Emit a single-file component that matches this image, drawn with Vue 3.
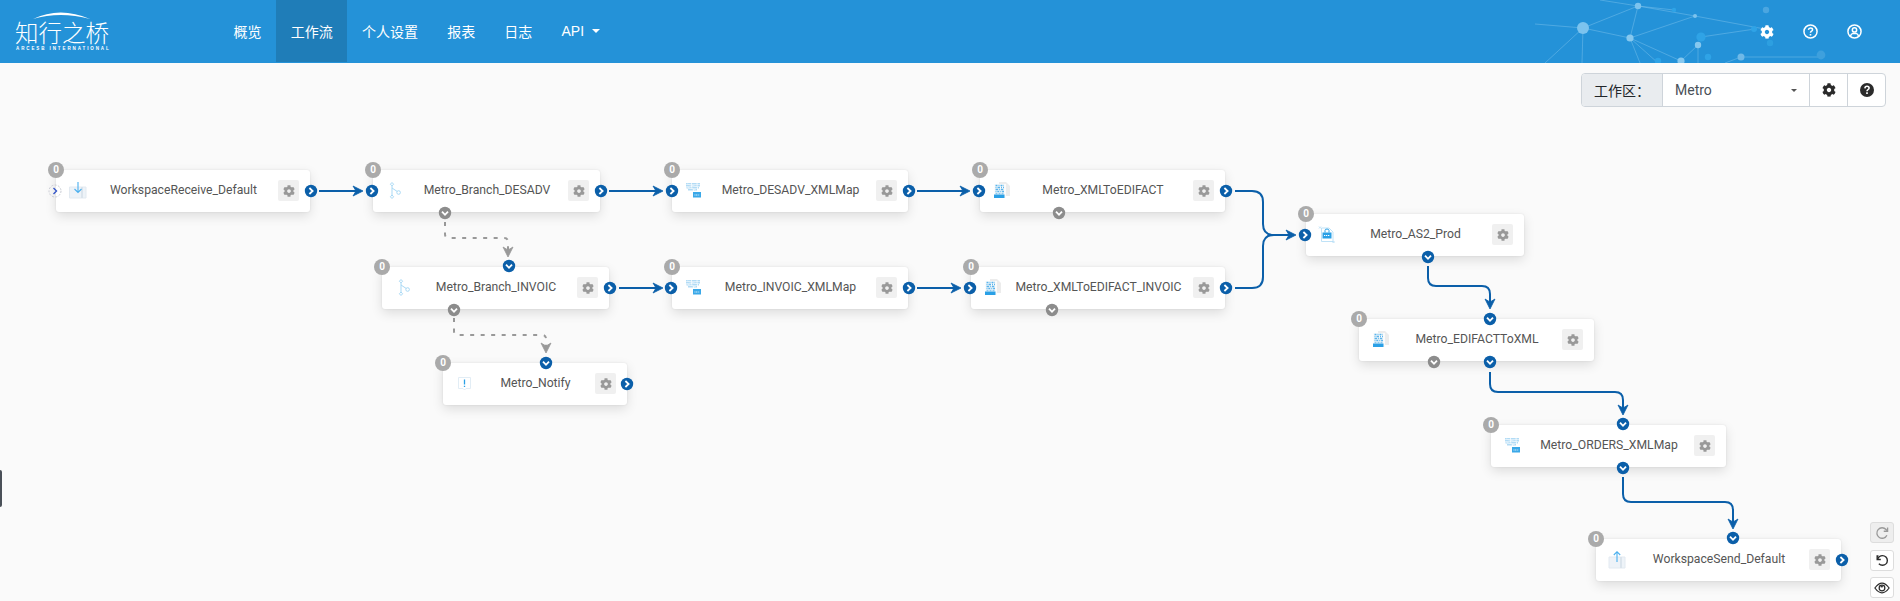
<script setup>
const navItems = [
  { label: '概览' },
  { label: '工作流', active: true },
  { label: '个人设置' },
  { label: '报表' },
  { label: '日志' },
  { label: 'API', caret: true }
]

const nodes = [
  { name: 'WorkspaceReceive_Default', x: 56, y: 170, w: 254, icon: 'receive' },
  { name: 'Metro_Branch_DESADV', x: 373, y: 170, w: 227, icon: 'branch' },
  { name: 'Metro_DESADV_XMLMap', x: 672, y: 170, w: 236, icon: 'map' },
  { name: 'Metro_XMLToEDIFACT', x: 980, y: 170, w: 245, icon: 'doc' },
  { name: 'Metro_Branch_INVOIC', x: 382, y: 267, w: 227, icon: 'branch' },
  { name: 'Metro_INVOIC_XMLMap', x: 672, y: 267, w: 236, icon: 'map' },
  { name: 'Metro_XMLToEDIFACT_INVOIC', x: 971, y: 267, w: 254, icon: 'doc' },
  { name: 'Metro_Notify', x: 443, y: 363, w: 184, icon: 'notify' },
  { name: 'Metro_AS2_Prod', x: 1306, y: 214, w: 218, icon: 'as2' },
  { name: 'Metro_EDIFACTToXML', x: 1359, y: 319, w: 235, icon: 'doc' },
  { name: 'Metro_ORDERS_XMLMap', x: 1491, y: 425, w: 235, icon: 'map' },
  { name: 'WorkspaceSend_Default', x: 1596, y: 539, w: 245, icon: 'send' }
]

// [x, y, direction, tone]
const ports = [
  [311, 191, 'r', 'blue'], [372, 191, 'r', 'blue'], [601, 191, 'r', 'blue'], [672, 191, 'r', 'blue'],
  [909, 191, 'r', 'blue'], [979, 191, 'r', 'blue'], [1226, 191, 'r', 'blue'],
  [610, 288, 'r', 'blue'], [671, 288, 'r', 'blue'], [909, 288, 'r', 'blue'], [970, 288, 'r', 'blue'],
  [1226, 288, 'r', 'blue'], [1305, 235, 'r', 'blue'], [627, 384, 'r', 'blue'], [1842, 560, 'r', 'blue'],
  [509, 266, 'd', 'blue'], [546, 363, 'd', 'blue'], [1490, 319, 'd', 'blue'], [1623, 424, 'd', 'blue'],
  [1733, 538, 'd', 'blue'], [1428, 257, 'd', 'blue'], [1490, 362, 'd', 'blue'], [1623, 468, 'd', 'blue'],
  [445, 213, 'd', 'gray'], [454, 310, 'd', 'gray'], [1059, 213, 'd', 'gray'], [1052, 310, 'd', 'gray'],
  [1434, 362, 'd', 'gray']
]

const solidEdges = [
  'M319 191H356', 'M609 191H656', 'M917 191H963', 'M619 288H656', 'M917 288H954',
  'M1235 191H1252Q1263 191 1263 202V224Q1263 235 1274 235H1289',
  'M1235 288H1252Q1263 288 1263 277V246Q1263 235 1274 235H1289',
  'M1428 266V278Q1428 286 1436 286H1482Q1490 286 1490 294V302',
  'M1490 372V384Q1490 392 1498 392H1615Q1623 392 1623 400V408',
  'M1623 477V494Q1623 502 1631 502H1725Q1733 502 1733 510V522'
]

const dashedEdges = [
  'M445 222V234Q445 238 449 238H504Q508 238 508 242V250',
  'M454 318V331Q454 335 458 335H542Q546 335 546 339V346'
]

const solidHeads = [
  [363, 191, 0], [663, 191, 0], [970, 191, 0], [663, 288, 0], [961, 288, 0], [1296, 235, 0],
  [1490, 309, 90], [1623, 415, 90], [1733, 529, 90]
]
const dashedHeads = [[508, 257, 90], [546, 353, 90]]

const cogPath = 'M487.4 315.7l-42.6-24.6c4.3-23.2 4.3-47 0-70.2l42.6-24.6c4.9-2.8 7.1-8.6 5.5-14-11.1-35.6-30-67.8-54.7-94.6-3.8-4.1-10-5.1-14.8-2.3L380.8 110c-17.9-15.4-38.5-27.3-60.8-35.1V25.8c0-5.6-3.9-10.5-9.4-11.7-36.7-8.2-74.3-7.8-109.2 0-5.5 1.2-9.4 6.1-9.4 11.7V75c-22.2 7.9-42.8 19.8-60.8 35.1L88.7 85.5c-4.9-2.8-11-1.9-14.8 2.3-24.7 26.7-43.6 58.9-54.7 94.6-1.7 5.4.6 11.2 5.5 14L67.3 221c-4.3 23.2-4.3 47 0 70.2l-42.6 24.6c-4.9 2.8-7.1 8.6-5.5 14 11.1 35.6 30 67.8 54.7 94.6 3.8 4.1 10 5.1 14.8 2.3l42.6-24.6c17.9 15.4 38.5 27.3 60.8 35.1v49.2c0 5.6 3.9 10.5 9.4 11.7 36.7 8.2 74.3 7.8 109.2 0 5.5-1.2 9.4-6.1 9.4-11.7v-49.2c22.2-7.9 42.8-19.8 60.8-35.1l42.6 24.6c4.9 2.8 11 1.9 14.8-2.3 24.7-26.7 43.6-58.9 54.7-94.6 1.5-5.5-.7-11.3-5.6-14.1zM256 336c-44.1 0-80-35.9-80-80s35.9-80 80-80 80 35.9 80 80-35.9 80-80 80z'

const netLines = [
  [1583, 28, 1638, 6], [1583, 28, 1630, 38], [1638, 6, 1630, 38], [1638, 6, 1695, 16], [1630, 38, 1695, 16],
  [1630, 38, 1681, 61], [1630, 38, 1640, 63], [1630, 38, 1658, 63], [1583, 28, 1582, 63], [1583, 28, 1545, 63],
  [1583, 28, 1535, 24], [1638, 6, 1600, 0], [1681, 61, 1698, 45], [1698, 45, 1698, 63], [1741, 57, 1821, 57],
  [1701, 37, 1755, 29], [1695, 16, 1770, 30], [1741, 57, 1725, 63], [1638, 6, 1674, 10]
]
const netDots = [
  [1583, 28, 6, '#7cc3ee'], [1638, 6, 3.2, '#7cc3ee'], [1630, 38, 3.6, '#86c8ef'], [1695, 16, 2, '#7cc3ee'],
  [1698, 45, 3.2, '#86c8ef'], [1681, 61, 3.6, '#86c8ef'], [1741, 57, 3.5, '#6fb9e8'],
  [1701, 37, 4.6, '#2fa3e6'], [1708, 57, 3.2, '#2fa3e6'], [1658, 61, 3.2, '#2fa3e6'], [1674, 10, 2.2, '#2fa3e6'],
  [1766, 10, 3.2, '#4ba6e0'], [1754, 29, 3, '#2fa3e6'], [1770, 43, 3.2, '#2d9fe0'], [1821, 55, 4.4, '#3ea0dd']
]
</script>

<template>
  <div class="page">
    <header class="topbar">
      <svg class="network" width="1900" height="63" viewBox="0 0 1900 63">
        <line v-for="(l, i) in netLines" :key="'l' + i" :x1="l[0]" :y1="l[1]" :x2="l[2]" :y2="l[3]" stroke="#9fd3f3" stroke-opacity=".35" stroke-width="1" />
        <circle v-for="(d, i) in netDots" :key="'d' + i" :cx="d[0]" :cy="d[1]" :r="d[2]" :fill="d[3]" />
      </svg>
      <div class="logo">
        <svg class="logo-arc" width="93" height="12" viewBox="0 0 93 12"><path d="M17 9Q44 -4 74 9Q44 1 17 9Z" fill="#fff" /></svg>
        <div class="logo-name">知行之桥</div>
        <div class="logo-sub">ARCESB INTERNATIONAL</div>
      </div>
      <nav class="nav">
        <a v-for="item in navItems" :key="item.label" class="nav-item" :class="{ active: item.active }">
          {{ item.label }}<i v-if="item.caret" class="nav-caret"></i>
        </a>
      </nav>
      <div class="top-icons">
        <svg width="14" height="14" viewBox="0 0 512 512"><path :d="cogPath" fill="#fff" /></svg>
        <svg width="15" height="15" viewBox="0 0 16 16" fill="none" stroke="#fff">
          <circle cx="8" cy="8" r="7" stroke-width="1.6" />
          <path d="M5.8 6.2Q6 4.2 8 4.2Q10.2 4.2 10.2 6Q10.2 7 9 7.7Q8 8.2 8 9.4" stroke-width="1.6" />
          <path d="M8 10.7V12.3" stroke-width="1.7" />
        </svg>
        <svg width="15" height="15" viewBox="0 0 16 16" fill="none" stroke="#fff" stroke-width="1.6">
          <circle cx="8" cy="8" r="7" />
          <circle cx="8" cy="6.3" r="2.3" />
          <path d="M3.6 13Q4.4 10.3 6.3 10H9.7Q11.6 10.3 12.4 13" />
        </svg>
      </div>
    </header>

    <main class="workspace">
      <div class="canvas">
        <svg class="edges" width="1900" height="601" viewBox="0 0 1900 601" fill="none">
          <path v-for="(d, i) in solidEdges" :key="'s' + i" :d="d" stroke="#0b5fa9" stroke-width="2" />
          <path v-for="(d, i) in dashedEdges" :key="'g' + i" :d="d" stroke="#999" stroke-width="2" stroke-dasharray="4 6.5" />
          <path v-for="(h, i) in solidHeads" :key="'h' + i" d="M0 0L-10 -5L-7 0L-10 5Z" fill="#0b5fa9" stroke="#0b5fa9" stroke-width=".8"
            :transform="`translate(${h[0]} ${h[1]}) rotate(${h[2]})`" />
          <path v-for="(h, i) in dashedHeads" :key="'k' + i" d="M0 0L-10 -5L-7 0L-10 5Z" fill="#999" stroke="#999" stroke-width=".8"
            :transform="`translate(${h[0]} ${h[1]}) rotate(${h[2]})`" />
        </svg>

        <div v-for="n in nodes" :key="n.name" class="node" :style="{ left: n.x + 'px', top: n.y + 'px', width: n.w + 'px' }">
          <span class="badge">0</span>
          <svg class="node-icon" width="20" height="20" viewBox="0 0 20 20" fill="none">
            <g v-if="n.icon === 'receive'">
              <path d="M1.5 6H18V17H1.5Z" fill="#eef3f8" stroke="#e3eaf1" />
              <path d="M14 6V17" stroke="#dbe4ec" stroke-width="2" />
              <path d="M10 1V11M6.5 8L10 11.5L13.5 8" stroke="#4bb0ee" stroke-width="1.1" />
            </g>
            <g v-else-if="n.icon === 'send'">
              <path d="M1 7H17V18H1Z" fill="#eef3f8" stroke="#e3eaf1" />
              <path d="M13 7V18" stroke="#dbe4ec" stroke-width="2" />
              <path d="M9 12V2M5.8 5L9 1.7L12.2 5" stroke="#4bb0ee" stroke-width="1.1" />
            </g>
            <g v-else-if="n.icon === 'branch'" stroke="#a9d9f5" stroke-width="1">
              <path d="M7 4V15M7 7L13 11" />
              <path d="M7 1.5L8.6 3.2L7 4.9L5.4 3.2Z" fill="#fff" />
              <circle cx="13.6" cy="11.5" r="1.8" fill="#fff" />
              <path d="M7 14L8.6 15.8L7 17.5L5.4 15.8Z" fill="#fff" />
            </g>
            <g v-else-if="n.icon === 'map'">
              <path d="M2 2.8H16M2 4.8H16M2.5 6.8H15M4 8.8H13" stroke="#b2dbf5" stroke-width="1.4" stroke-dasharray="5 .7" />
              <path d="M3 3L14 6M3 6L12 9" stroke="#e8f5fc" stroke-width=".8" />
              <rect x="9" y="11" width="8" height="5.5" fill="#3aa8e8" />
              <path d="M10.5 14H15.5" stroke="#e4f4fd" stroke-width="1" stroke-dasharray="1 .6" />
            </g>
            <g v-else-if="n.icon === 'doc'">
              <path d="M7 1H14L18 5V15H7Z" fill="#ececec" />
              <rect x="2" y="3" width="12" height="14" fill="#fbfbfb" />
              <g stroke="#5ab4ec" stroke-width="1.6">
                <path d="M3.5 4.5H12" stroke-dasharray="2 1 1 1" />
                <path d="M3.5 6.5H12" stroke-dasharray="1 1 2.5 1" />
                <path d="M3.5 8.5H12" stroke-dasharray="2.5 .8 1 1" />
                <path d="M3.5 10.5H12" stroke-dasharray="1 .8 2 1" />
                <path d="M3.5 12.5H12" stroke-dasharray="2 1 2 1" stroke-opacity=".7" />
              </g>
              <rect x="2" y="13.5" width="10.5" height="3.5" fill="#2aa0e6" />
            </g>
            <g v-else-if="n.icon === 'as2'">
              <path d="M3.5 3H11L15 7V16.5H3.5Z" fill="#fff" stroke="#bfe2f7" />
              <path d="M1 1.5L3 3.5M3 1.5L1 3.5M14.5 16L16.5 18M16.5 16L14.5 18" stroke="#a9d9f5" stroke-width=".7" />
              <rect x="4.5" y="7.5" width="9" height="6" fill="#2aa0e6" />
              <path d="M7 7.5V5.5Q7 4 9 4Q11 4 11 5.5V7.5" stroke="#2aa0e6" />
              <path d="M6 10.5H12" stroke="#fff" stroke-dasharray="1.2 .7" />
            </g>
            <g v-else-if="n.icon === 'notify'">
              <path d="M3.5 3.5H15.5V14.5H11L9.5 16L8 14.5H3.5Z" fill="#fff" stroke="#e2edf5" />
              <path d="M9.5 5.5V10.5M9.5 11.8V13" stroke="#2aa0e6" stroke-width="1.3" />
            </g>
          </svg>
          <span class="node-label">{{ n.name }}</span>
          <span class="node-gear">
            <svg width="12" height="12" viewBox="0 0 512 512"><path :d="cogPath" fill="#999" /></svg>
          </span>
        </div>

        <svg class="port-open" width="14" height="14" viewBox="0 0 14 14" fill="none">
          <circle cx="7" cy="7" r="6" stroke="#c9ccd4" stroke-dasharray="2 1.4" />
          <path d="M5.5 4L8.5 7L5.5 10" stroke="#3556c8" stroke-width="1.4" />
        </svg>

        <svg class="ports" width="1900" height="601" viewBox="0 0 1900 601" fill="none">
          <g v-for="(p, i) in ports" :key="'p' + i" :transform="`translate(${p[0]} ${p[1]})`">
            <circle r="6.2" :fill="p[3] === 'blue' ? '#0b5fa9' : '#8c8c8c'" />
            <path :d="p[2] === 'r' ? 'M-1.6 -3L1.6 0L-1.6 3' : 'M-3 -1.4L0 1.8L3 -1.4'" stroke="#fff" stroke-width="1.8" />
          </g>
        </svg>
      </div>

      <div class="handle"></div>

      <div class="toolbar">
        <div class="ws-group">
          <span class="ws-label">工作区：</span>
          <span class="ws-select">Metro<i class="ws-caret"></i></span>
          <span class="ws-btn">
            <svg width="14" height="14" viewBox="0 0 512 512"><path :d="cogPath" fill="#2b2b2b" /></svg>
          </span>
          <span class="ws-btn">
            <svg width="14" height="14" viewBox="0 0 16 16" fill="none">
              <circle cx="8" cy="8" r="8" fill="#2b2b2b" />
              <path d="M5.6 6.2Q5.8 3.8 8 3.8Q10.4 3.8 10.4 5.8Q10.4 6.9 9.1 7.6Q8 8.2 8 9.5" stroke="#fff" stroke-width="1.8" />
              <path d="M8 10.7V12.6" stroke="#fff" stroke-width="1.9" />
            </svg>
          </span>
        </div>
      </div>

      <div class="side-tools">
        <span class="tool disabled">
          <svg width="14" height="14" viewBox="0 0 16 16" fill="none" stroke="#999" stroke-width="1.5">
            <path d="M13.6 10.5A6 6 0 1 1 12.6 4L14 5.6" /><path d="M14.4 1.6V6H10" />
          </svg>
        </span>
        <span class="tool">
          <svg width="14" height="14" viewBox="0 0 16 16" fill="none" stroke="#2b2b2b" stroke-width="1.6">
            <path d="M4 3.4H2.5V7.5H6.6" /><path d="M3 7Q4.6 3 8.6 3A5.5 5.5 0 0 1 8.6 14Q6 14 4.4 12.4" />
          </svg>
        </span>
        <span class="tool">
          <svg width="16" height="14" viewBox="0 0 18 14" fill="none" stroke="#2b2b2b" stroke-width="1.4">
            <path d="M1 7Q5 1.5 9 1.5Q13 1.5 17 7Q13 12.5 9 12.5Q5 12.5 1 7Z" />
            <circle cx="9" cy="7" r="3.2" /><path d="M7.6 6.2A1.6 1.6 0 0 1 10 5.8" />
          </svg>
        </span>
      </div>
    </main>
  </div>
</template>

<style>
html, body { margin: 0; background: #fafafa; }
</style>

<style scoped>
.page {
  position: relative;
  display: flex;
  flex-direction: column;
  height: 601px;
  overflow: hidden;
  background: #fafafa;
  font-family: Roboto, "Noto Sans CJK SC", sans-serif;
}
.topbar {
  position: relative;
  display: flex;
  align-items: stretch;
  flex: none;
  height: 63px;
  background: #2492d8;
  color: #fff;
}
.network { position: absolute; left: 0; top: 0; }
.logo { position: relative; flex: none; width: 219px; height: 63px; }
.logo-arc { position: absolute; left: 16px; top: 10px; }
.logo-name {
  position: absolute;
  left: 15px;
  top: 19px;
  font-family: "Noto Sans CJK SC", sans-serif;
  font-size: 23.5px;
  font-weight: 300;
  line-height: 26px;
  white-space: nowrap;
}
.logo-sub {
  position: absolute;
  left: 16px;
  top: 46px;
  width: 94px;
  font-family: "Liberation Sans", sans-serif;
  font-size: 4.5px;
  font-weight: 700;
  line-height: 6px;
  letter-spacing: 1.9px;
  white-space: nowrap;
}
.nav { position: relative; display: flex; }
.nav-item {
  display: flex;
  align-items: center;
  height: 62px;
  padding: 0 14.6px;
  font-family: "Liberation Sans", "Noto Sans CJK SC", sans-serif;
  font-size: 14px;
  color: #fff;
}
.nav-item.active { background: #1f7db8; }
.nav-caret {
  width: 0;
  height: 0;
  margin-left: 8px;
  border-left: 4px solid transparent;
  border-right: 4px solid transparent;
  border-top: 4px solid #fff;
}
.top-icons {
  position: relative;
  display: flex;
  align-items: center;
  gap: 29px;
  margin-left: auto;
  padding-right: 38px;
}
.workspace { position: relative; flex: 1; }
.toolbar {
  position: relative;
  display: flex;
  justify-content: flex-end;
  padding: 10px 14px 0 0;
}
.ws-group {
  display: flex;
  height: 34px;
  box-sizing: border-box;
  border: 1px solid #ced4da;
  border-radius: 4px;
  background: #fff;
  font-family: "Noto Sans CJK SC", Roboto, sans-serif;
  font-size: 14px;
  line-height: 32px;
  overflow: hidden;
}
.ws-label {
  width: 81px;
  box-sizing: border-box;
  padding-left: 12px;
  background: #e9ecef;
  border-right: 1px solid #ced4da;
  color: #212529;
}
.ws-select {
  position: relative;
  width: 147px;
  box-sizing: border-box;
  padding-left: 12px;
  border-right: 1px solid #ced4da;
  color: #495057;
  font-family: Roboto, sans-serif;
}
.ws-caret {
  position: absolute;
  right: 12px;
  top: 15px;
  width: 0;
  height: 0;
  border-left: 3.5px solid transparent;
  border-right: 3.5px solid transparent;
  border-top: 3.5px solid #555;
}
.ws-btn {
  display: flex;
  align-items: center;
  justify-content: center;
  width: 37px;
  border-right: 1px solid #ced4da;
}
.ws-btn:last-child { border-right: 0; }
.canvas { position: absolute; left: 0; top: -63px; width: 1900px; height: 601px; }
.edges, .ports { position: absolute; left: 0; top: 0; pointer-events: none; }
.ports { z-index: 3; }
.node {
  position: absolute;
  z-index: 2;
  display: flex;
  align-items: flex-start;
  height: 42px;
  box-sizing: border-box;
  background: #fff;
  border-radius: 3px;
  box-shadow: 0 0 2px rgba(0, 0, 0, .1), 0 4px 12px rgba(0, 0, 0, .12);
}
.badge {
  position: absolute;
  left: -8px;
  top: -8px;
  width: 16px;
  height: 16px;
  border-radius: 50%;
  background: #aaa;
  color: #fff;
  font-size: 10px;
  font-weight: 700;
  line-height: 15px;
  text-align: center;
}
.node-icon { flex: none; margin: 11px 1px 0 12px; }
.node-label {
  flex: 1;
  min-width: 0;
  font-size: 12.2px;
  line-height: 40px;
  text-align: center;
  color: #555;
  white-space: nowrap;
}
.node-gear {
  display: flex;
  flex: none;
  align-items: center;
  justify-content: center;
  width: 21px;
  height: 21px;
  margin: 10px 11px 0 0;
  border-radius: 2px;
  background: #f0f0f0;
}
.port-open { position: absolute; left: 48px; top: 184px; z-index: 3; }
.handle {
  position: absolute;
  left: 0;
  top: 407px;
  width: 2px;
  height: 37px;
  border-radius: 0 2px 2px 0;
  background: #4a5058;
}
.side-tools {
  position: absolute;
  left: 1870px;
  top: 459px;
  display: flex;
  flex-direction: column;
  gap: 6.5px;
}
.tool {
  display: flex;
  align-items: center;
  justify-content: center;
  width: 24px;
  height: 21px;
  box-sizing: border-box;
  border: 1px solid #ddd;
  border-radius: 3px;
  background: #fff;
}
.tool.disabled { background: #eee; }
</style>
